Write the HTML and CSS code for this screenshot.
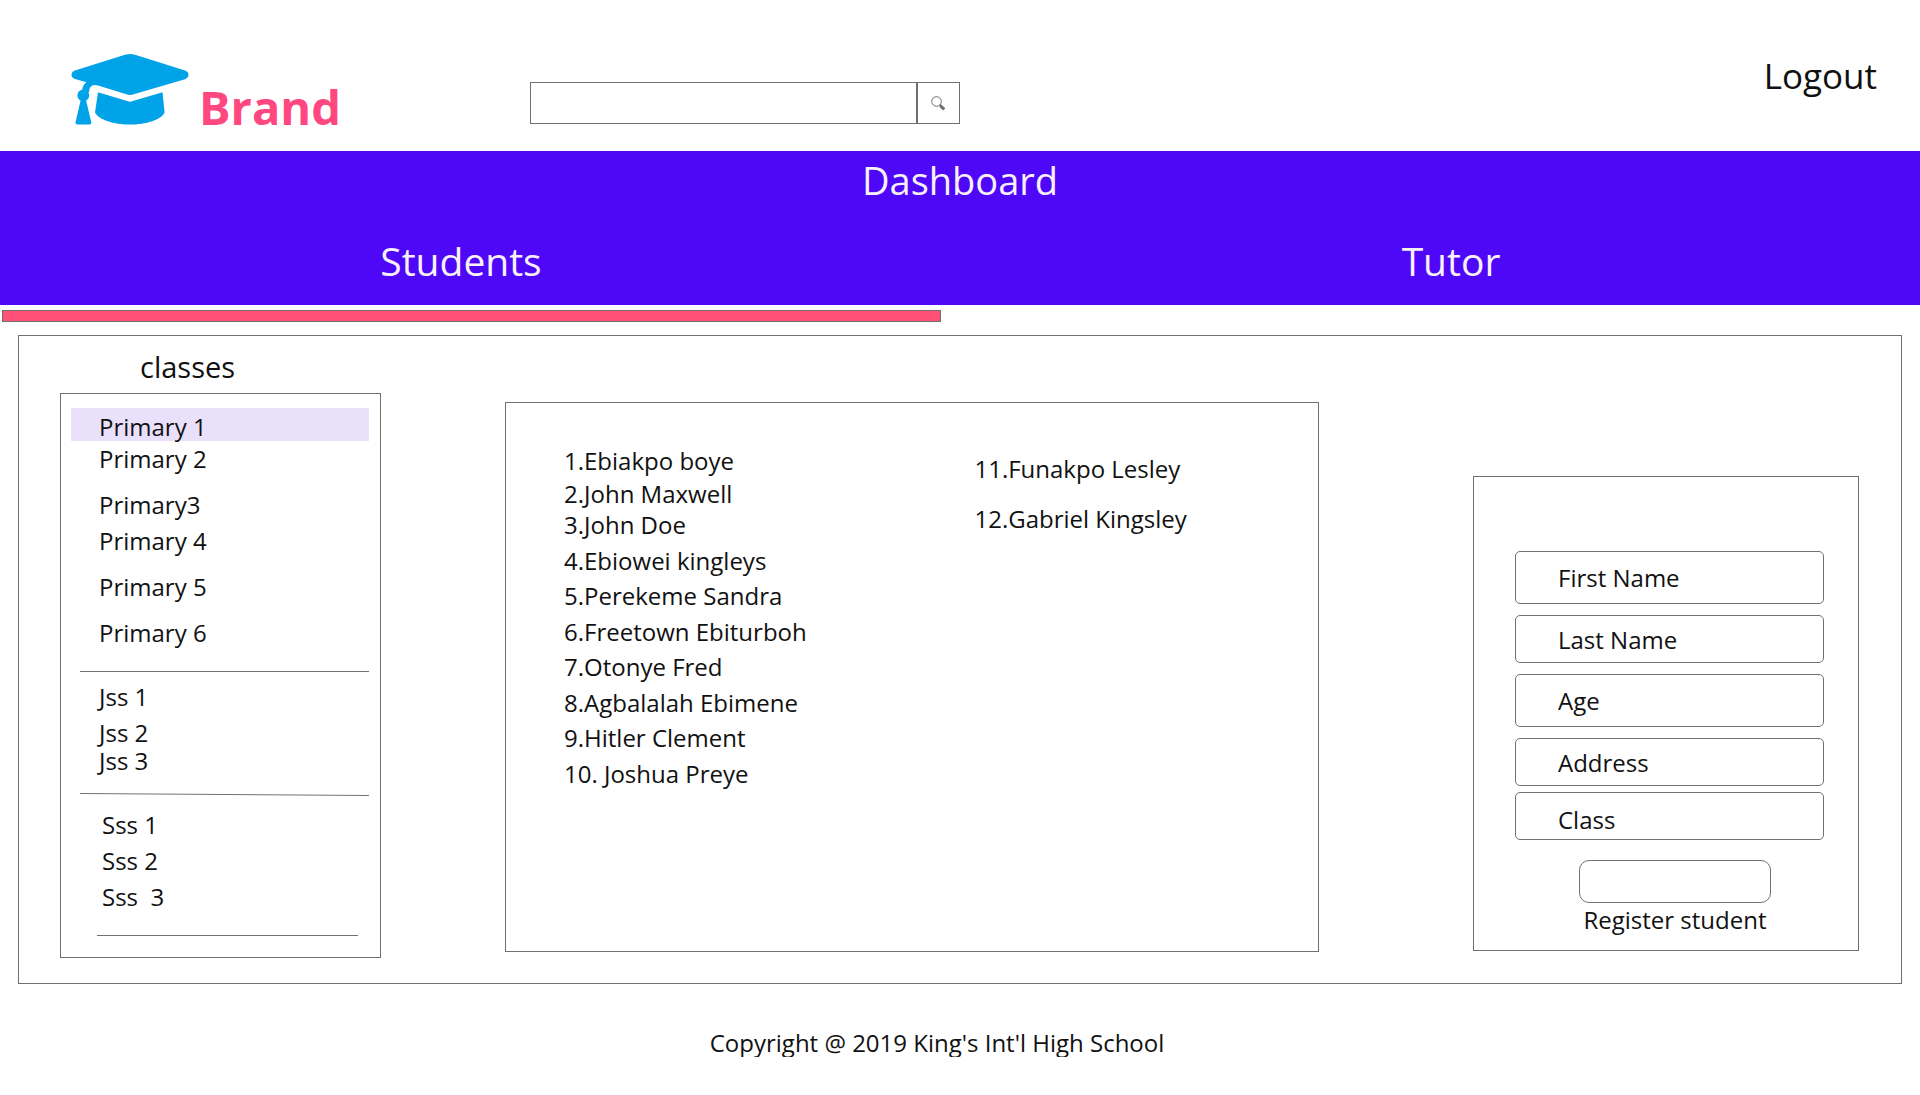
FILE: index.html
```html
<!DOCTYPE html>
<html lang="en">
<head>
<meta charset="utf-8">
<title>Dashboard - Students</title>
<link rel="stylesheet" href="styles.css">
</head>
<body>
<header class="header">
  <a class="brand" href="#">
    <svg class="brand-logo" viewBox="0 0 118 71" aria-hidden="true">
      <path d="M54 .8Q59-.8 64 .8L114 16.400Q117.500 17.800 117.500 20.800T114 25.200L61 40.800Q59 41.400 57 40.800L27 31.500Q18 29 18 38.500L11 37Q12 30 15.500 28.300L4 25Q.5 23.800 .5 20.800T4 16.500Z"/>
      <path d="M27 38.300 57 47.300Q59 48 61 47.300L91.500 38.300 93.600 58.500C90 66 75 70.600 59 70.600S28 66 24 58.500Z"/>
      <circle cx="12.300" cy="41.300" r="5.900"/>
      <path d="M9.700 46H15L20.300 68.500Q20.500 70.400 18.500 70.400H6.500Q4.300 70.400 4.500 68.500Z"/>
    </svg>
    <span class="brand-name">Brand</span>
  </a>
  <form class="search" role="search">
    <input class="search-input" type="search" aria-label="Search">
    <button class="search-button" type="button" aria-label="Search">
      <svg class="search-icon" viewBox="0 0 14 15" aria-hidden="true">
        <circle cx="5.500" cy="5.500" r="4.800"/>
        <path class="search-neck" d="M8.800 8.800 10 10"/>
        <path class="search-handle" d="M9.500 9.800 13.200 13.400"/>
      </svg>
    </button>
  </form>
  <a class="logout" href="#">Logout</a>
</header>

<nav class="nav">
  <h1 class="nav-title">Dashboard</h1>
  <div class="tabs">
    <a href="#" aria-current="page">Students</a>
    <a href="#">Tutor</a>
  </div>
</nav>
<div class="tab-marker"></div>

<main class="workspace">
  <section class="classes">
    <h2 class="classes-title">classes</h2>
    <div class="classes-box">
      <ul class="class-list class-list-primary">
        <li class="selected">Primary 1</li>
        <li>Primary 2</li>
        <li>Primary3</li>
        <li>Primary 4</li>
        <li>Primary 5</li>
        <li>Primary 6</li>
      </ul>
      <hr class="divider">
      <ul class="class-list class-list-jss">
        <li>Jss 1</li>
        <li>Jss 2</li>
        <li>Jss 3</li>
      </ul>
      <svg class="divider-slant" viewBox="0 0 290 3" preserveAspectRatio="none" aria-hidden="true"><path d="M0 .5 290 2.500"/></svg>
      <ul class="class-list class-list-sss">
        <li>Sss 1</li>
        <li>Sss 2</li>
        <li>Sss  3</li>
      </ul>
      <hr class="divider divider-short">
    </div>
  </section>

  <section class="students" aria-label="Students">
    <ul class="student-list">
      <li>1.Ebiakpo boye</li>
      <li>2.John Maxwell</li>
      <li>3.John Doe</li>
      <li>4.Ebiowei kingleys</li>
      <li>5.Perekeme Sandra</li>
      <li>6.Freetown Ebiturboh</li>
      <li>7.Otonye Fred</li>
      <li>8.Agbalalah Ebimene</li>
      <li>9.Hitler Clement</li>
      <li>10. Joshua Preye</li>
    </ul>
    <ul class="student-list student-list-more">
      <li>11.Funakpo Lesley</li>
      <li>12.Gabriel Kingsley</li>
    </ul>
  </section>

  <form class="register">
    <input class="field field-tall" type="text" placeholder="First Name" aria-label="First Name">
    <input class="field" type="text" placeholder="Last Name" aria-label="Last Name">
    <input class="field field-tall" type="text" placeholder="Age" aria-label="Age">
    <input class="field" type="text" placeholder="Address" aria-label="Address">
    <input class="field field-tight" type="text" placeholder="Class" aria-label="Class">
    <div class="submit">
      <button class="submit-button" id="register" type="button"></button>
      <label for="register">Register student</label>
    </div>
  </form>
</main>

<footer class="footer">Copyright @ 2019 King's Int'l High School</footer>
</body>
</html>
```
FILE: styles.css
```css
* {
  box-sizing: border-box;
}

body {
  margin: 0;
  background: #fff;
  color: #111;
  font-family: "Segoe UI", "Open Sans", "Noto Sans", sans-serif;
  font-size: 24px;
  line-height: 28px;
}

a {
  color: inherit;
  text-decoration: none;
}

h1,
h2 {
  margin: 0;
  font-weight: 400;
}

ul {
  margin: 0;
  padding: 0;
  list-style: none;
}

input,
button {
  margin: 0;
  border: 1px solid #707070;
  background: #fff;
  color: inherit;
  font: inherit;
}

/* Header */
.header {
  display: grid;
  grid-template-columns: 530fr 430fr 960fr;
  align-items: start;
  min-height: 151px;
  padding-top: 52px;
}

.brand {
  display: flex;
  align-items: baseline;
  gap: 10px;
  margin-top: 2px;
  padding-left: 71px;
}

.brand-logo {
  flex: none;
  width: 118px;
  height: 71px;
  fill: #00a2e8;
}

.brand-name {
  color: #ff4880;
  font-size: 47px;
  font-weight: 700;
  line-height: 56px;
}

.search {
  display: flex;
  margin-top: 30px;
}

.search-input {
  flex: 1;
  min-width: 0;
  height: 42px;
  padding: 0 12px;
  border-radius: 0;
  appearance: none;
}

.search-button {
  display: flex;
  align-items: center;
  justify-content: center;
  width: 43px;
  padding: 0 2px 0 0;
}

.search-icon {
  width: 14px;
  height: 15px;
  fill: none;
  stroke: #707070;
}

.search-neck {
  stroke-width: 2;
}

.search-handle {
  stroke-width: 3;
}

.logout {
  justify-self: end;
  margin-right: 43px;
  font-size: 35px;
  line-height: 48px;
}

/* Navigation band */
.nav {
  padding: 2px 0 17px;
  background: #4f08f7;
  color: #f8f0fb;
  font-size: 39px;
  line-height: 54px;
  text-align: center;
}

.nav-title {
  font-size: 38px;
}

.tabs {
  display: grid;
  grid-template-columns: 922fr 938fr;
  column-gap: 60px;
  margin-top: 27px;
}

.tab-marker {
  width: calc(49% - 2px);
  height: 12px;
  margin: 5px 0 0 2px;
  border: 1px solid #707070;
  background: #ff5178;
}

/* Workspace */
.workspace {
  display: grid;
  grid-template-columns: 321fr 124fr 814fr 154fr 386fr;
  align-items: start;
  margin: 13px 18px 0;
  padding: 11px 42px 25px 41px;
  border: 1px solid #707070;
}

.classes {
  grid-column: 1;
}

.classes-title {
  margin-bottom: 6px;
  padding-left: 80px;
  font-size: 29px;
  line-height: 40px;
}

.classes-box {
  padding: 14px 11px 21px 10px;
  border: 1px solid #707070;
}

.class-list {
  display: grid;
}

.class-list li {
  display: flex;
  align-items: flex-end;
  padding-left: 28px;
  white-space: pre;
}

.class-list .selected {
  background: #e9e0fc;
}

.class-list-primary {
  grid-template-rows: 33px 32px 46px 36px 46px 46px;
}

.class-list-jss {
  grid-template-rows: 39px 36px 28px;
}

.class-list-sss {
  grid-template-rows: 43px 36px 36px;
  padding-left: 3px;
}

.divider {
  height: 1px;
  margin: 24px 0 0 9px;
  border: 0;
  background: #707070;
}

.divider-short {
  margin: 24px 11px 0 26px;
}

.divider-slant {
  display: block;
  width: calc(100% - 9px);
  height: 3px;
  margin: 18px 0 0 9px;
  stroke: #707070;
}

.students {
  grid-column: 3;
  display: grid;
  grid-template-columns: 411fr 344fr;
  align-items: start;
  min-height: 550px;
  margin-top: 55px;
  padding: 44px 0 44px 58px;
  border: 1px solid #707070;
}

.student-list {
  display: grid;
  grid-template-rows: 28px 33px 31px repeat(3, 36px 35px) 36px;
  align-items: end;
}

.student-list-more {
  grid-template-rows: 36px 50px;
}

.register {
  grid-column: 5;
  display: flex;
  flex-direction: column;
  margin-top: 129px;
  padding: 63px 34px 16px 41px;
  border: 1px solid #707070;
}

.field {
  width: 100%;
  height: 48px;
  margin-top: 11px;
  padding: 0 20px 0 42px;
  border-radius: 5px;
}

.field::placeholder {
  color: #111;
  opacity: 1;
}

.field-tall {
  height: 53px;
}

.field-tight {
  margin-top: 6px;
  padding-top: 6px;
}

.submit {
  display: flex;
  flex-direction: column;
  align-items: center;
  gap: 3px;
  margin-top: 20px;
  padding-left: 11px;
}

.submit-button {
  width: 192px;
  height: 43px;
  border-radius: 10px;
}

.footer {
  margin-top: 45px;
  padding-right: 46px;
  text-align: center;
}
```
